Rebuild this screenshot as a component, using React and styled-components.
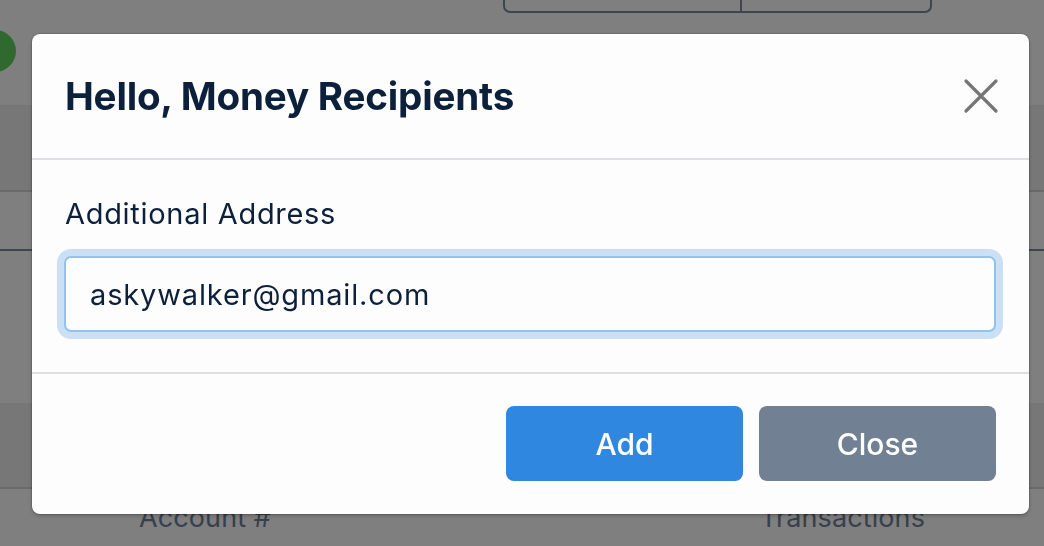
import styled, { createGlobalStyle } from "styled-components";

const GlobalStyle = createGlobalStyle`
  * { box-sizing: border-box; }
  html, body {
    margin: 0;
    padding: 0;
    background: #ffffff;
    font-family: Inter, "Noto Sans", sans-serif;
    overflow: hidden;
  }
`;

export default function App() {
  return (
    <>
      <GlobalStyle />
      <Page>
        <TopBar>
          <ButtonGroup>
            <GroupButton w={239} />
            <GroupButton w={190} last />
          </ButtonGroup>
        </TopBar>
        <AvatarRow>
          <Avatar />
        </AvatarRow>
        <TableRow h={85} shade line="#d4d4d4" />
        <TableRow h={57} line="#7a8aa0" />
        <TableRow h={152} />
        <TableRow h={84} shade line="#d4d4d4" />
        <HeadRow>
          <HeadCell w={621}>Account #</HeadCell>
          <HeadCell>Transactions</HeadCell>
        </HeadRow>
      </Page>

      <Overlay>
        <Modal>
          <ModalHeader>
            <Title>Hello, Money Recipients</Title>
            <CloseIcon aria-label="Close">
              <svg width="36" height="36" viewBox="0 0 36 36">
                <path
                  d="M3 3 L33 33 M33 3 L3 33"
                  stroke="#767676"
                  strokeWidth="3.2"
                  strokeLinecap="round"
                />
              </svg>
            </CloseIcon>
          </ModalHeader>
          <ModalBody>
            <Label>Additional Address</Label>
            <Input defaultValue="askywalker@gmail.com" />
          </ModalBody>
          <ModalFooter>
            <Button primary>Add</Button>
            <Button>Close</Button>
          </ModalFooter>
        </Modal>
      </Overlay>
    </>
  );
}

const Page = styled.div`
  width: 1044px;
  height: 546px;
  display: flex;
  flex-direction: column;
`;

const TopBar = styled.div`
  height: 30px;
  padding-left: 503px;
  display: flex;
  align-items: flex-start;
`;

const ButtonGroup = styled.div`
  display: flex;
  height: 13px;
  border: 2px solid #7a8aa0;
  border-top: none;
  border-radius: 0 0 7px 7px;
`;

const GroupButton = styled.div`
  width: ${({ w }) => w - 2}px;
  border-right: ${({ last }) => (last ? "none" : "2px solid #7a8aa0")};
`;

const AvatarRow = styled.div`
  height: 75px;
  display: flex;
  align-items: flex-start;
`;

const Avatar = styled.div`
  width: 42px;
  height: 42px;
  margin-left: -26px;
  border-radius: 50%;
  background: #5fd25f;
`;

const TableRow = styled.div`
  height: ${({ h, line }) => h + (line ? 2 : 0)}px;
  background: ${({ shade }) => (shade ? "#eeeeee" : "#ffffff")};
  border-bottom: ${({ line }) => (line ? `2px solid ${line}` : "none")};
`;

const HeadRow = styled.div`
  display: flex;
  padding: 13px 0 0 139px;
`;

const HeadCell = styled.div`
  width: ${({ w }) => (w ? `${w}px` : "auto")};
  font-size: 27px;
  letter-spacing: 0.1px;
  color: #718096;
  line-height: 32px;
`;

const Overlay = styled.div`
  position: fixed;
  inset: 0;
  background: rgba(0, 0, 0, 0.5);
  display: flex;
  align-items: flex-start;
  padding: 34px 0 0 32px;
`;

const Modal = styled.div`
  width: 997px;
  height: 480px;
  background: #fdfdfd;
  border-radius: 8px;
  box-shadow: 0 0 0 1px rgba(0, 0, 0, 0.12), 0 2px 4px rgba(0, 0, 0, 0.2);
  display: flex;
  flex-direction: column;
`;

const ModalHeader = styled.div`
  height: 126px;
  padding: 0 32px 0 33px;
  display: flex;
  align-items: center;
  justify-content: space-between;
  border-bottom: 2px solid #dedee3;
`;

const Title = styled.h2`
  margin: 0;
  font-size: 38.6px;
  font-weight: 700;
  color: #0c1f3b;
  letter-spacing: -0.2px;
`;

const CloseIcon = styled.div`
  width: 36px;
  height: 36px;
  display: flex;
  margin-right: -2px;
`;

const ModalBody = styled.div`
  height: 214px;
  padding: 35px 33px 0 32px;
  display: flex;
  flex-direction: column;
  border-bottom: 2px solid #dedee3;
`;

const Label = styled.div`
  font-size: 29px;
  letter-spacing: 0.7px;
  line-height: 37px;
  color: #0c1f3b;
  margin-bottom: 24px;
  padding-left: 1px;
`;

const Input = styled.input`
  height: 76px;
  width: 100%;
  border: 2px solid #93c2ee;
  border-radius: 7px;
  box-shadow: 0 0 0 7px #cce0f5;
  background: #fdfdfd;
  padding: 0 24px;
  font-family: Inter, "Noto Sans", sans-serif;
  font-size: 29px;
  letter-spacing: 0.85px;
  color: #0c1f3b;
  outline: none;
`;

const ModalFooter = styled.div`
  flex: 1;
  display: flex;
  justify-content: flex-end;
  align-items: flex-start;
  gap: 16px;
  padding: 32px 33px 0 0;
`;

const Button = styled.button`
  width: 237px;
  height: 75px;
  border: none;
  border-radius: 8px;
  background: ${({ primary }) => (primary ? "#3087df" : "#718093")};
  color: #ffffff;
  font-family: Inter, "Noto Sans", sans-serif;
  font-size: 30px;
  font-weight: 500;
`;
